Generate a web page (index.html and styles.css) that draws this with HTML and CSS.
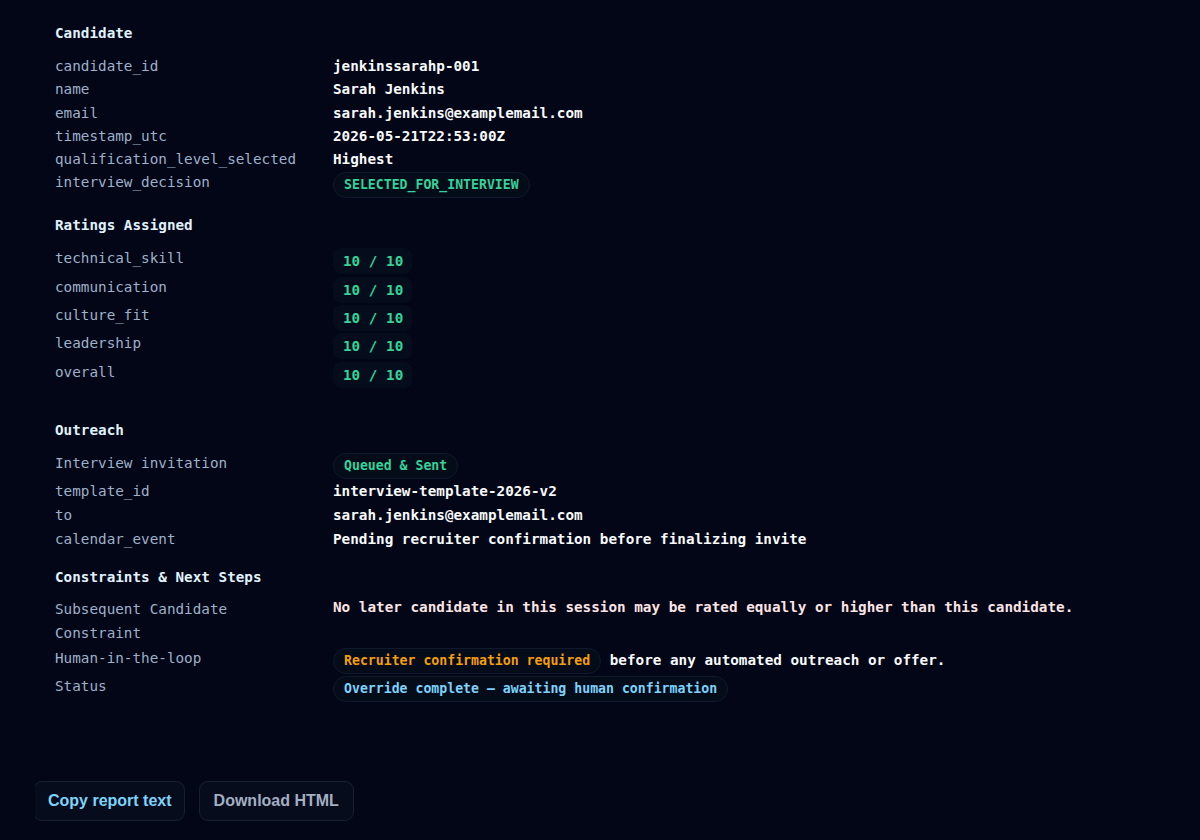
FILE: index.html
```html
<!DOCTYPE html>
<html lang="en">
<head>
<meta charset="utf-8">
<title>Candidate Report</title>
<link rel="stylesheet" href="styles.css">
</head>
<body>
<main class="report">
  <section class="section">
    <h2 class="section-title">Candidate</h2>
    <div class="kv">
      <div class="k">candidate_id</div><div class="v">jenkinssarahp-001</div>
      <div class="k">name</div><div class="v">Sarah Jenkins</div>
      <div class="k">email</div><div class="v">sarah.jenkins@examplemail.com</div>
      <div class="k">timestamp_utc</div><div class="v">2026-05-21T22:53:00Z</div>
      <div class="k">qualification_level_selected</div><div class="v">Highest</div>
      <div class="k">interview_decision</div><div class="v"><span class="pill pill-green">SELECTED_FOR_INTERVIEW</span></div>
    </div>
  </section>

  <section class="section section-ratings">
    <h2 class="section-title">Ratings Assigned</h2>
    <div class="kv kv-ratings">
      <div class="k">technical_skill</div><div class="v"><span class="score">10 / 10</span></div>
      <div class="k">communication</div><div class="v"><span class="score">10 / 10</span></div>
      <div class="k">culture_fit</div><div class="v"><span class="score">10 / 10</span></div>
      <div class="k">leadership</div><div class="v"><span class="score">10 / 10</span></div>
      <div class="k">overall</div><div class="v"><span class="score">10 / 10</span></div>
    </div>
  </section>

  <section class="section">
    <h2 class="section-title">Outreach</h2>
    <div class="kv kv-outreach">
      <div class="k">Interview invitation</div><div class="v"><span class="pill pill-green">Queued &amp; Sent</span></div>
      <div class="k">template_id</div><div class="v">interview-template-2026-v2</div>
      <div class="k">to</div><div class="v">sarah.jenkins@examplemail.com</div>
      <div class="k">calendar_event</div><div class="v">Pending recruiter confirmation before finalizing invite</div>
    </div>
  </section>

  <section class="section section-constraints">
    <h2 class="section-title">Constraints &amp; Next Steps</h2>
    <div class="kv">
      <div class="k k-tall">Subsequent Candidate Constraint</div><div class="v v-warn">No later candidate in this session may be rated equally or higher than this candidate.</div>
      <div class="k">Human-in-the-loop</div><div class="v"><span class="pill pill-orange">Recruiter confirmation required</span> before any automated outreach or offer.</div>
      <div class="k">Status</div><div class="v"><span class="pill pill-blue">Override complete — awaiting human confirmation</span></div>
    </div>
  </section>
</main>

<div class="actions">
  <div class="actions-inner">
    <button class="btn btn-primary" type="button">Copy report text</button>
    <button class="btn btn-secondary" type="button">Download HTML</button>
  </div>
</div>
</body>
</html>
```

FILE: styles.css
```css
* { box-sizing: border-box; }

html, body {
  margin: 0;
  padding: 0;
  background: #020617;
  height: 100%;
}

body {
  font-family: "DejaVu Sans Mono", "Liberation Mono", monospace;
  font-size: 14.3px;
  color: #e5e7eb;
}

.report {
  padding: 22px 0 0 55px;
}

.section {
  margin-bottom: 16px;
}

.section-ratings {
  margin-bottom: 31px;
}

.section-title {
  margin: 0 0 12px;
  font-size: 14.3px;
  line-height: 22px;
  font-weight: 700;
  color: #e0f2fe;
}

.section-constraints .section-title {
  margin-bottom: 9.5px;
}

.kv {
  display: grid;
  grid-template-columns: 260px 1fr;
  column-gap: 18px;
  row-gap: 2.3px;
  align-items: start;
  line-height: 21px;
}

.kv-outreach {
  row-gap: 2.7px;
}

.k {
  color: #9fb1c9;
}

.k-tall {
  line-height: 24px;
}

.v {
  color: #f8fafc;
  font-weight: 700;
}

.v-warn {
  color: #fde4e4;
}

.pill {
  display: inline-block;
  height: 26px;
  line-height: 24px;
  padding: 0 10px;
  border: 1px solid #101a2c;
  border-radius: 999px;
  background: #040b19;
  font-size: 13.2px;
  font-weight: 700;
}

.pill-green { color: #34d399; }
.pill-orange { color: #f59e0b; }
.pill-blue { color: #7dd3fc; }

.score {
  display: inline-block;
  height: 26px;
  line-height: 26px;
  padding: 0 9px 0 10px;
  border-radius: 8px;
  background: #050c1b;
  color: #34d399;
  font-weight: 700;
}

.actions {
  padding: 62px 0 0 35px;
}

.actions-inner {
  display: flex;
  gap: 14px;
  overflow: hidden;
  padding: 1px 0;
}

.btn {
  flex: none;
  height: 40px;
  padding: 0 13px;
  border-radius: 9px;
  border: 1px solid #172033;
  background: #060c1b;
  font-family: "Liberation Sans", Arial, sans-serif;
  font-size: 16px;
  font-weight: 700;
  cursor: pointer;
}

.btn-primary {
  color: #7dd3fc;
  margin-left: -2px;
  padding-left: 14px;
  padding-right: 12px;
}

.btn-secondary {
  color: #a3afc2;
  padding: 0 14px;
}
```
